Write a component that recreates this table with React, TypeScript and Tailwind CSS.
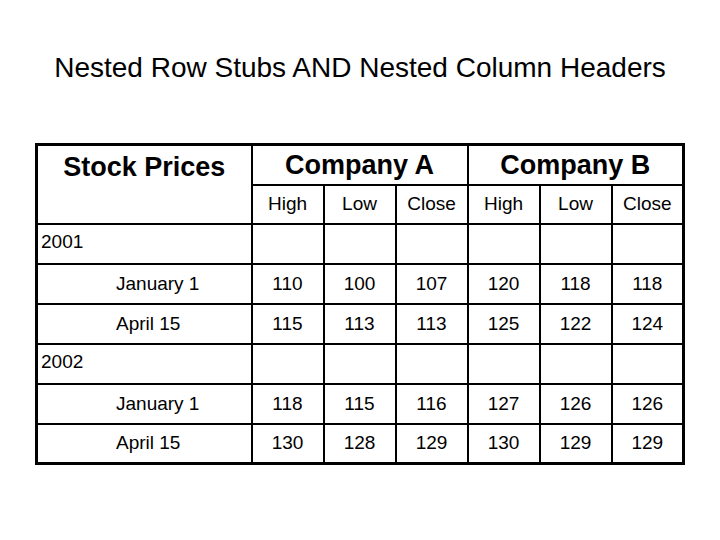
import { Fragment } from "react"

const companies = ["Company A", "Company B"]
const subCols = ["High", "Low", "Close"]

const years = [
  {
    year: "2001",
    rows: [
      { label: "January 1", values: [110, 100, 107, 120, 118, 118] },
      { label: "April 15", values: [115, 113, 113, 125, 122, 124] },
    ],
  },
  {
    year: "2002",
    rows: [
      { label: "January 1", values: [118, 115, 116, 127, 126, 126] },
      { label: "April 15", values: [130, 128, 129, 130, 129, 129] },
    ],
  },
]

export default function App() {
  return (
    <main
      className="w-[720px] h-[540px] bg-white text-black overflow-hidden"
      style={{ fontFamily: '"Liberation Sans", Arial, sans-serif' }}
    >
      <h1 className="pt-[52px] text-center text-[28px] leading-[32px] font-normal">
        Nested Row Stubs AND Nested Column Headers
      </h1>

      <table className="mt-[59px] ml-[35px] w-[647px] table-fixed border-collapse border-[3px] border-black text-[19px]">
        <colgroup>
          <col className="w-[215px]" />
          {[0, 1, 2, 3, 4, 5].map((i) => (
            <col key={i} className="w-[72px]" />
          ))}
        </colgroup>
        <thead>
          <tr className="h-[40px]">
            <th
              rowSpan={2}
              className="border-2 border-black align-top text-center text-[27px] font-bold leading-[40px] pt-[1px]"
            >
              Stock Prices
            </th>
            {companies.map((c) => (
              <th
                key={c}
                colSpan={3}
                className="border-2 border-black text-center text-[27px] font-bold leading-[36px]"
              >
                {c}
              </th>
            ))}
          </tr>
          <tr className="h-[39px]">
            {companies.map((c) =>
              subCols.map((s) => (
                <th key={c + s} className="border-2 border-black text-center font-normal leading-[22px]">
                  {s}
                </th>
              ))
            )}
          </tr>
        </thead>
        <tbody>
          {years.map((y) => (
            <Fragment key={y.year}>
              <tr className="h-[40px]">
                <td className="border-2 border-black pl-[3px] pb-[4px] leading-[22px]">{y.year}</td>
                {[0, 1, 2, 3, 4, 5].map((i) => (
                  <td key={i} className="border-2 border-black" />
                ))}
              </tr>
              {y.rows.map((r) => (
                <tr key={y.year + r.label} className="h-[40px]">
                  <td className="border-2 border-black pl-[78px] leading-[22px]">{r.label}</td>
                  {r.values.map((v, i) => (
                    <td key={i} className="border-2 border-black text-center leading-[22px]">
                      {v}
                    </td>
                  ))}
                </tr>
              ))}
            </Fragment>
          ))}
        </tbody>
      </table>
    </main>
  )
}
